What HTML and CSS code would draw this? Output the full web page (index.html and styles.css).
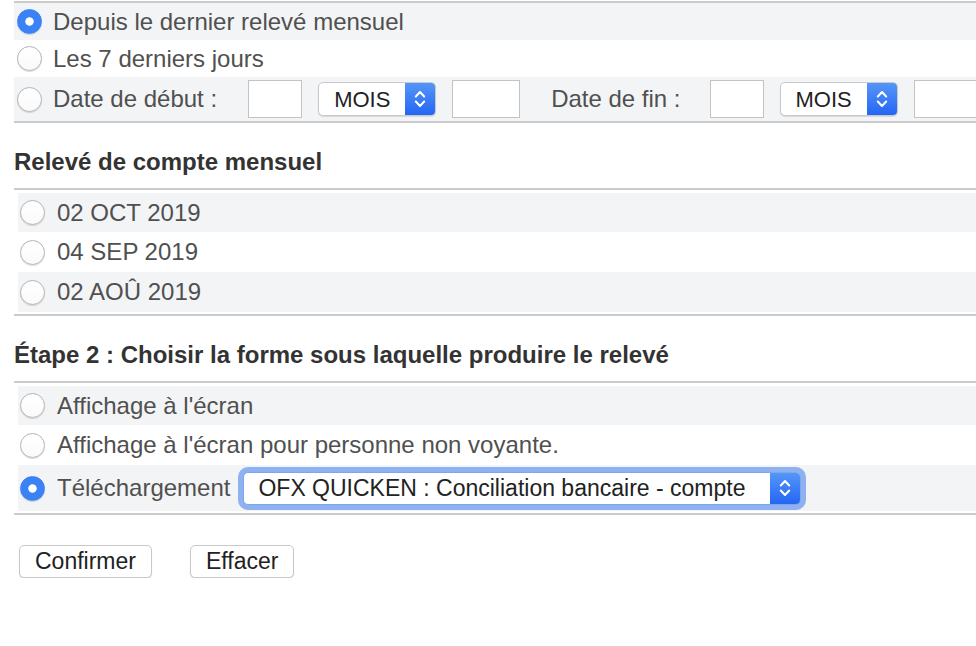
FILE: index.html
```html
<!DOCTYPE html>
<html lang="fr">
<head>
  <meta charset="UTF-8">
  <meta name="viewport" content="width=device-width, initial-scale=1">
  <title>Relevé de compte</title>
  <link rel="stylesheet" href="styles.css">
</head>
<body>
<div class="page">

  <div class="group">
    <label class="row shaded"><input type="radio" name="period" checked> Depuis le dernier relevé mensuel</label>
    <label class="row"><input type="radio" name="period"> Les 7 derniers jours</label>
    <div class="row shaded range">
      <label class="opt"><input type="radio" name="period"> Date de début :</label>
      <input class="day wide-gap" type="text">
      <span class="select month">
        <select><option>MOIS</option></select>
        <span class="arrow"><svg width="12" height="22" viewBox="0 0 12 22"><path d="M1.8 8.5 6 4 10.2 8.5M1.8 13.5 6 18 10.2 13.5" fill="none" stroke="#fff" stroke-width="2" stroke-linecap="round" stroke-linejoin="round"/></svg></span>
      </span>
      <input class="year" type="text">
      <span class="range-label">Date de fin :</span>
      <input class="day" type="text">
      <span class="select month">
        <select><option>MOIS</option></select>
        <span class="arrow"><svg width="12" height="22" viewBox="0 0 12 22"><path d="M1.8 8.5 6 4 10.2 8.5M1.8 13.5 6 18 10.2 13.5" fill="none" stroke="#fff" stroke-width="2" stroke-linecap="round" stroke-linejoin="round"/></svg></span>
      </span>
      <input class="year" type="text">
    </div>
  </div>

  <h2>Relevé de compte mensuel</h2>
  <div class="group inset">
    <label class="row shaded"><input type="radio" name="stmt"> 02 OCT 2019</label>
    <label class="row"><input type="radio" name="stmt"> 04 SEP 2019</label>
    <label class="row shaded"><input type="radio" name="stmt"> 02 AOÛ 2019</label>
  </div>

  <h2>Étape 2 : Choisir la forme sous laquelle produire le relevé</h2>
  <div class="group inset">
    <label class="row shaded"><input type="radio" name="format"> Affichage à l'écran</label>
    <label class="row"><input type="radio" name="format"> Affichage à l'écran pour personne non voyante.</label>
    <div class="row shaded tall">
      <label class="opt"><input type="radio" name="format" checked> Téléchargement</label>
      <span class="select export focused">
        <select><option>OFX QUICKEN : Conciliation bancaire - compte</option></select>
        <span class="arrow"><svg width="12" height="22" viewBox="0 0 12 22"><path d="M1.8 8.5 6 4 10.2 8.5M1.8 13.5 6 18 10.2 13.5" fill="none" stroke="#fff" stroke-width="2" stroke-linecap="round" stroke-linejoin="round"/></svg></span>
      </span>
    </div>
  </div>

  <div class="actions">
    <button type="button">Confirmer</button>
    <button type="button">Effacer</button>
  </div>

</div>
</body>
</html>
```

FILE: styles.css
```css
body {
  margin: 0;
  font-family: "Liberation Sans", Arial, sans-serif;
  color: #505050;
  background: #fff;
  overflow: hidden;
}
.page {
  padding: 1px 0 0 14px;
  min-width: 1000px;
}
.group {
  border-top: 2px solid #cbcbcb;
  border-bottom: 2px solid #cbcbcb;
}
.group.inset {
  padding: 3px 0 2px 4px;
}
.row {
  display: flex;
  align-items: center;
  height: 37px;
  padding-left: 3px;
  font-size: 24px;
  white-space: nowrap;
}
.inset .row {
  height: 39px;
  padding-left: 2px;
}
.inset .row + .row {
  height: 40px;
}
.row.shaded {
  background: #f3f4f6;
}
.row.range {
  height: 44px;
}
.inset .row.tall {
  height: 46px;
}
.opt {
  display: flex;
  align-items: center;
}
input[type="radio"] {
  appearance: none;
  -webkit-appearance: none;
  box-sizing: border-box;
  width: 25px;
  height: 25px;
  margin: 0 11px 0 0;
  border-radius: 50%;
  border: 1px solid #b5b5b5;
  background: linear-gradient(#fff, #fafafa);
  box-shadow: 0 1px 1px rgba(0,0,0,0.14);
  flex: none;
}
.inset input[type="radio"] {
  margin-right: 12px;
}
input[type="radio"]:checked {
  border-color: #3a7ff5;
  background: radial-gradient(circle, #fff 0 3.8px, #3b82f6 4.6px);
}
input[type="text"] {
  box-sizing: border-box;
  height: 38px;
  border: 1px solid #c3c3c3;
  background: #fff;
  margin: 0 0 0 16px;
  padding: 0;
}
.day {
  width: 54px;
}
.year {
  width: 68px;
}
.wide-gap {
  margin-left: 31px !important;
}
.range-label {
  margin: 0 13px 0 31px;
}
.select {
  display: flex;
  box-sizing: border-box;
  height: 34px;
  border: 1px solid #c9c9c9;
  border-radius: 5px;
  background: #fff;
  box-shadow: 0 1px 1px rgba(0,0,0,0.12);
  overflow: hidden;
}
.select.month {
  width: 118px;
  margin-left: 16px;
}
.select select {
  appearance: none;
  -webkit-appearance: none;
  flex: 1;
  min-width: 0;
  border: none;
  background: transparent;
  font-family: "Liberation Sans", Arial, sans-serif;
  color: #222;
  outline: none;
}
.month select {
  font-size: 22px;
  padding: 0 0 0 15px;
}
.arrow {
  display: flex;
  align-items: center;
  justify-content: center;
  width: 30px;
  flex: none;
  background: linear-gradient(#5596f8, #2466f4);
}
.select.export {
  width: 558px;
  height: 33px;
  margin-left: 13px;
}
.export select {
  font-size: 23px;
  padding: 0 0 0 14px;
}
.select.focused {
  overflow: visible;
  border-color: #7ea5ee;
  box-shadow: 0 0 0 5px #8db1f1;
}
.select.focused .arrow {
  border-radius: 0 4px 4px 0;
}
h2 {
  margin: 25px 0 12px;
  font-size: 24px;
  line-height: 28px;
  color: #333;
}
.actions {
  display: flex;
  gap: 38px;
  margin: 30px 0 0 5px;
}
.actions button {
  height: 33px;
  padding: 0 15px;
  font-family: "Liberation Sans", Arial, sans-serif;
  font-size: 23px;
  color: #222;
  background: #fff;
  border: 1px solid #c8c8c8;
  border-radius: 5px;
  box-shadow: 0 1px 1px rgba(0,0,0,0.12);
}
```
